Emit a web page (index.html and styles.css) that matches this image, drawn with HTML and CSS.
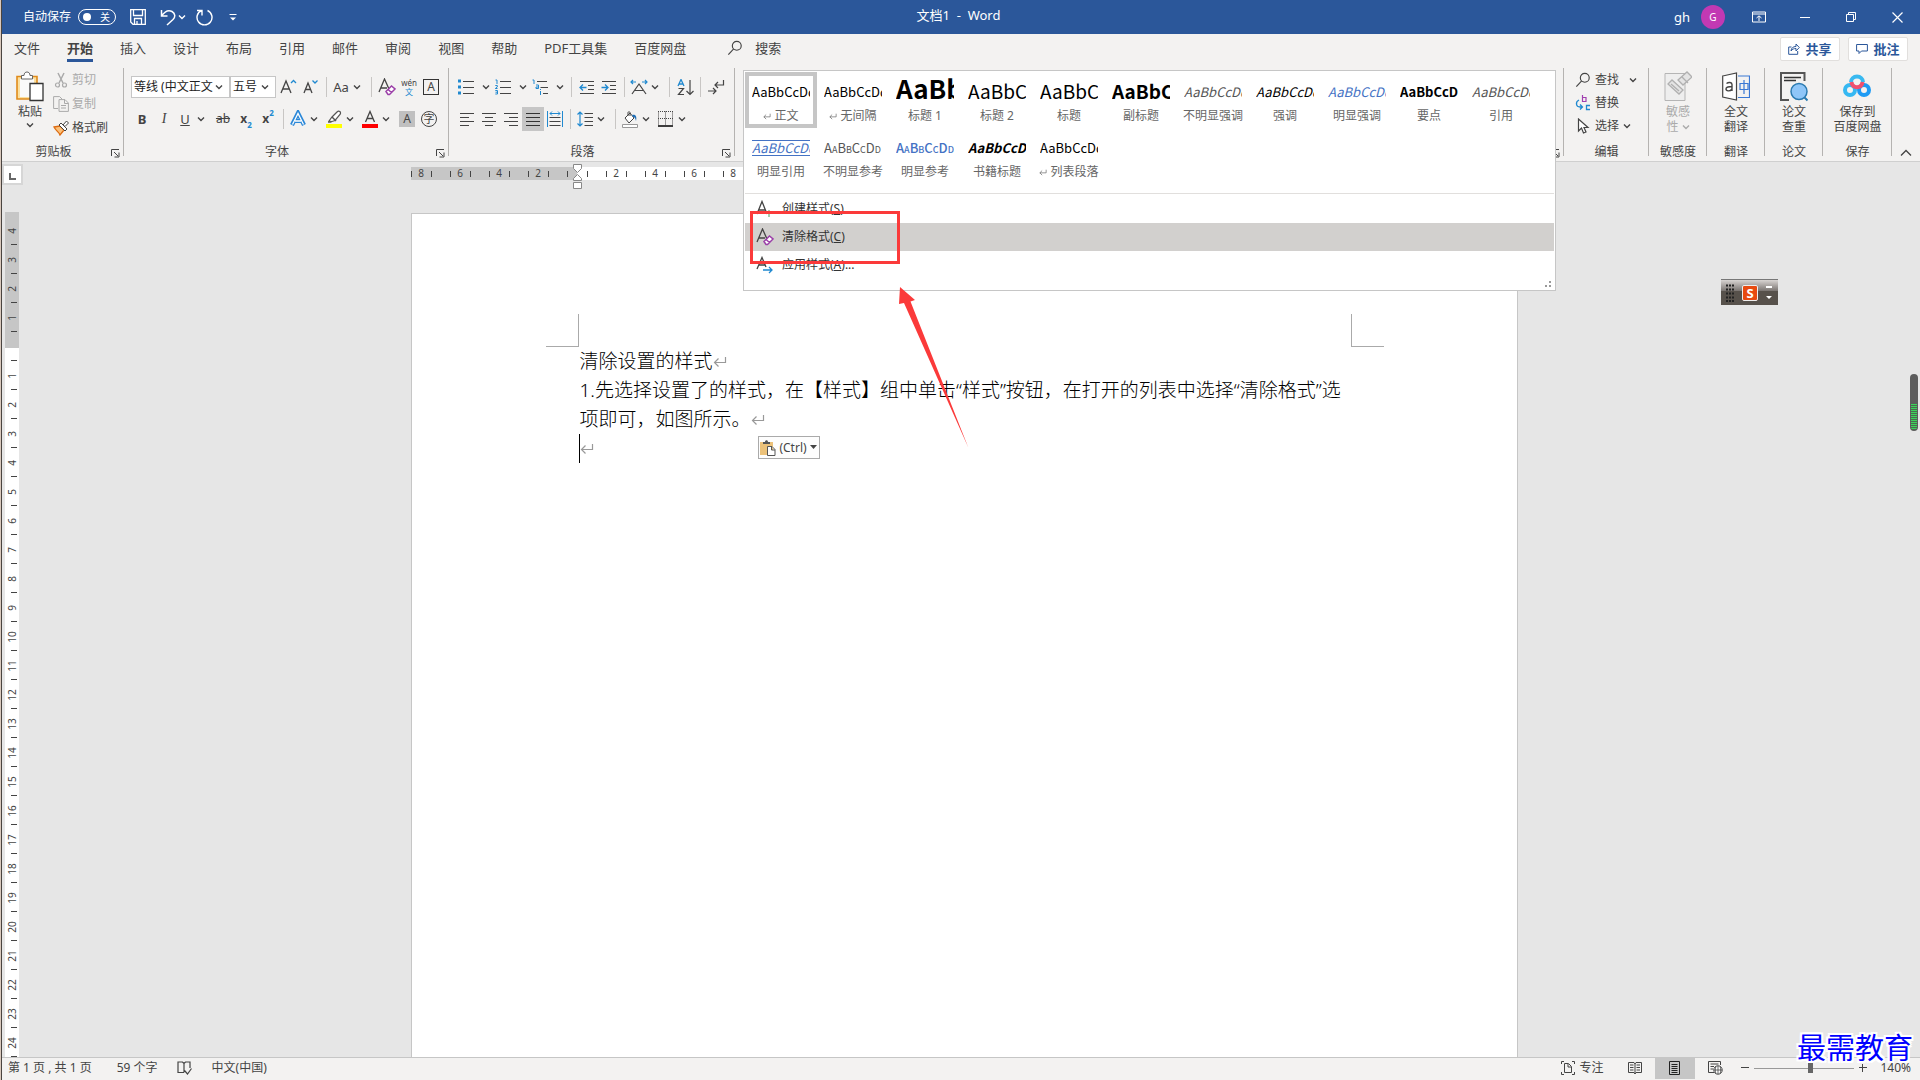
FILE: index.html
```html
<!DOCTYPE html>
<html lang="zh-CN">
<head>
<meta charset="utf-8">
<title>文档1 - Word</title>
<link rel="stylesheet" href="styles.css">
</head>
<body>
<svg class="defs" aria-hidden="true">
  <symbol id="chev" viewBox="0 0 8 8"><path d="M1 2.5 4 5.5 7 2.5" fill="none" stroke="currentColor" stroke-width="1.4"/></symbol>
  <symbol id="launch" viewBox="0 0 9 9"><path d="M.5 7V.5H8M3 3l4 4M8 3.5V8H3.500" fill="none" stroke="currentColor"/></symbol>
  <symbol id="find" viewBox="0 0 18 18"><circle cx="11" cy="6.500" r="5" fill="none" stroke="currentColor" stroke-width="1.300"/><path d="M7.500 10 1.500 16.500" stroke="currentColor" stroke-width="1.300"/></symbol>
  <symbol id="eraserA" viewBox="0 0 18 18"><path d="M1 14 6.500 1 11 11M3 10h6" fill="none" stroke="#444" stroke-width="1.300"/><path d="M8 13.500l5.500-5.500 3.500 3-5.500 5.500H10zM10 11.500l3.500 3" fill="#fff" stroke="#9b3fa8" stroke-width="1.500"/></symbol>
  <symbol id="ret" viewBox="0 0 14 14"><path d="M12.500 3v5.500H1.500M5.500 4.500l-4 4 4 4" fill="none" stroke="currentColor" stroke-width="1.200"/></symbol>
</svg>
<div class="app">
  <header class="titlebar">
    <div class="quick">
      <label class="autosave">自动保存 <span class="toggle"><input type="checkbox"><span>关</span></span></label>
      <button aria-label="保存"><svg width="16" height="16" viewBox="0 0 16 16"><path d="M.7.7h14.600v14.600H3L.7 13zM3.500.7v5.800h9V.7M4.500 15V9.500h7V15M7 15v-3" fill="none" stroke="#fff" stroke-width="1.300"/></svg></button>
      <button class="undo" aria-label="撤消"><svg width="16" height="17" viewBox="0 0 16 17"><path d="M1.500 1v6h6M1.500 7C5 2 9 .8 12 2.500c3.500 2 3.500 5.500 1 8L7 16" fill="none" stroke="#fff" stroke-width="1.500"/></svg><svg width="8" height="8"><use href="#chev"/></svg></button>
      <button aria-label="重做"><svg width="17" height="17" viewBox="0 0 17 17"><path d="M5.500 1.500a7.500 7.500 0 1 0 6 0M1 1.500h5v5" fill="none" stroke="#fff" stroke-width="1.400"/></svg></button>
      <button aria-label="自定义快速访问工具栏"><svg width="8" height="8" viewBox="0 0 8 8"><path d="M.5 1.500h7" stroke="#fff"/><path d="M1 4.500h6L4 7.500z" fill="#fff"/></svg></button>
    </div>
    <h1>文档1&nbsp; -&nbsp; Word</h1>
    <div class="window">
      <span>gh</span><span class="avatar">G</span>
      <button aria-label="功能区显示选项"><svg width="14" height="12" viewBox="0 0 14 12"><path d="M.5 1h13v10H.5zM.5 3h13M7 10V5M4.500 7 7 4.800 9.500 7" fill="none" stroke="#fff"/></svg></button>
      <button aria-label="最小化"><svg width="10" height="10"><path d="M0 5.500h10" stroke="#fff"/></svg></button>
      <button aria-label="还原"><svg width="10" height="10" viewBox="0 0 10 10"><path d="M.5 2.500h7v7h-7zM2.500 2.500v-2h7v7h-2" fill="none" stroke="#fff"/></svg></button>
      <button aria-label="关闭"><svg width="11" height="11" viewBox="0 0 11 11"><path d="M.5.5l10 10M10.500.5l-10 10" stroke="#fff" stroke-width="1.200"/></svg></button>
    </div>
  </header>

  <nav class="tabs">
    <a href="#">文件</a><a href="#" class="on">开始</a><a href="#">插入</a><a href="#">设计</a><a href="#">布局</a><a href="#">引用</a><a href="#">邮件</a><a href="#">审阅</a><a href="#">视图</a><a href="#">帮助</a><a href="#">PDF工具集</a><a href="#">百度网盘</a>
    <a href="#" class="search"><svg width="16" height="16"><use href="#find"/></svg>搜索</a>
    <div class="share">
      <button><svg width="12" height="12" viewBox="0 0 12 12"><path d="M3.500 4H.7v7.300h9V8M3 8c.3-3 2-4.500 5-4.500V1l3.300 3.500L8 8V5.500C6 5.500 4.500 6 3 8z" fill="none" stroke="#2b579a"/></svg>共享</button>
      <button><svg width="12" height="12" viewBox="0 0 12 12"><path d="M.6 1.500h10.800V8H5.500L3 10.500V8H.6z" fill="none" stroke="#2b579a"/></svg>批注</button>
    </div>
  </nav>

  <div class="ribbon">
    <section class="group clip">
      <div class="body">
        <button class="big"><svg width="28" height="31" viewBox="0 0 28 31"><path d="M1 5.500h20v22.500H1z" fill="#fbe0a0" stroke="#e08a1a" stroke-width="1.600"/><path d="M4 8h14v18H4z" fill="#fafafa"/><path d="M5.500 8V4.500H8C8 2 9.500 1 11 1s3 1 3 3.500h2.500V8z" fill="#fff" stroke="#666"/><path d="M14 12.500h13v17H14z" fill="#fff" stroke="#333" stroke-width="1.300"/></svg><span>粘贴</span><svg width="8" height="8"><use href="#chev"/></svg></button>
        <div class="stack">
          <button class="off"><svg width="16" height="16" viewBox="0 0 16 16"><path d="M5 1l5 10M11 1 6 11" stroke="#aaa" stroke-width="1.500"/><circle cx="4.500" cy="13" r="2" fill="none" stroke="#aaa" stroke-width="1.200"/><circle cx="11.500" cy="13" r="2" fill="none" stroke="#aaa" stroke-width="1.200"/></svg>剪切</button>
          <button class="off"><svg width="16" height="16" viewBox="0 0 16 16"><path d="M5 12.500H.6V.6h6l2.500 2.500M6 3.600h6l3.400 3.400v8.400H6zM11.500 4v3.500H15M8 9.500h5M8 12h5" fill="none" stroke="#aaa"/></svg>复制</button>
          <button><svg width="16" height="16" viewBox="0 0 16 16"><path d="M1 7l6-1 4 4-4 5c-1-3-4-4-6-8z" fill="#fbc07a" stroke="#dd6b10" stroke-width="1.300"/><path d="M6 5l2-2 6 6-2 2zM10 5l3.500-4 2 2L12 6.500z" fill="#fff" stroke="#444"/></svg>格式刷</button>
        </div>
      </div>
      <footer><span>剪贴板</span><button aria-label="剪贴板选项"><svg width="9" height="9"><use href="#launch"/></svg></button></footer>
    </section>

    <section class="group font">
      <div class="rows">
        <div class="row">
          <span class="combo face"><select aria-label="字体"><option>等线 (中文正文</option></select><svg width="8" height="8"><use href="#chev"/></svg></span><span class="combo size"><select aria-label="字号"><option>五号</option></select><svg width="8" height="8"><use href="#chev"/></svg></span>
          <button class="ic pre" aria-label="增大字号"><svg width="18" height="16" viewBox="0 0 18 16"><path d="M1 14 6 2l5 12M3 10h6" fill="none" stroke="#444" stroke-width="1.300"/><path d="M11 4l2.500-2.500L16 4" fill="none" stroke="#2089d0" stroke-width="1.300"/></svg></button>
          <button class="ic" aria-label="减小字号"><svg width="18" height="16" viewBox="0 0 18 16"><path d="M2 14 6 4l4 10M4 10.500h4.500" fill="none" stroke="#444" stroke-width="1.300"/><path d="M10.500 1.500 13 4l2.500-2.500" fill="none" stroke="#2089d0" stroke-width="1.300"/></svg></button>
          <i class="sep"></i>
          <button class="split" aria-label="更改大小写"><b class="aa">Aa</b><svg width="8" height="8"><use href="#chev"/></svg></button>
          <i class="sep"></i>
          <button class="ic" aria-label="清除所有格式"><svg width="18" height="18"><use href="#eraserA"/></svg></button>
          <button class="ic wen"><span>wén</span><span>文</span></button>
          <button class="ic"><span class="boxed">A</span></button>
        </div>
        <div class="row">
          <button class="ic b">B</button><button class="ic i">I</button>
          <button class="split"><span class="u">U</span><svg width="8" height="8"><use href="#chev"/></svg></button>
          <button class="ic strike">ab</button>
          <button class="ic x">x<sub>2</sub></button><button class="ic x">x<sup>2</sup></button>
          <i class="sep"></i>
          <button class="split" aria-label="文本效果"><svg width="16" height="18" viewBox="0 0 16 18"><path d="M2 15 8 3l6 12M4.500 11h7" fill="none" stroke="#2b88d8" stroke-width="4.200"/><path d="M2.500 14.500 8 3.500l5.500 11M5 11h6" fill="none" stroke="#fff" stroke-width="1.300"/></svg><svg width="8" height="8"><use href="#chev"/></svg></button>
          <button class="split" aria-label="突出显示颜色"><svg width="16" height="18" viewBox="0 0 16 18"><path d="M3 11l3-4 5-5c2-2 4.500 0 3 2.500l-5 6-3 1z" fill="#fff" stroke="#555" stroke-width="1.200"/><path d="M2 12h3.500M6 7l4 4" stroke="#555" stroke-width="1.500"/><path d="M0 14h16v4H0z" fill="#ff0"/></svg><svg width="8" height="8"><use href="#chev"/></svg></button>
          <button class="split" aria-label="字体颜色"><svg width="16" height="18" viewBox="0 0 16 18"><path d="M3.500 12 8 1.500 12.500 12M5 8.500h6" fill="none" stroke="#444" stroke-width="1.300"/><path d="M0 14h16v4H0z" fill="#f00"/></svg><svg width="8" height="8"><use href="#chev"/></svg></button>
          <button class="ic"><span class="shaded">A</span></button>
          <button class="ic"><span class="circled">字</span></button>
        </div>
      </div>
      <footer><span>字体</span><button aria-label="字体选项"><svg width="9" height="9"><use href="#launch"/></svg></button></footer>
    </section>

    <section class="group para">
      <div class="rows">
        <div class="row">
          <button class="split wide" aria-label="项目符号"><svg width="16" height="16" viewBox="0 0 16 16"><path d="M0 .5h3v3H0zM0 6.500h3v3H0zM0 12.500h3v3H0z" fill="#2089d0"/><path d="M5 2.500h11M5 8.500h11M5 14.500h11" stroke="#444"/></svg><svg width="8" height="8"><use href="#chev"/></svg></button>
          <button class="split wide" aria-label="编号"><svg width="16" height="16" viewBox="0 0 16 16"><path d="M.5 1H2v4M.3 6.500h2v1.500l-2 1.500h2.200M.3 11.500h2.200V15H.3M.5 13.200h2" fill="none" stroke="#2089d0"/><path d="M5 2.500h11M5 8.500h11M5 14.500h11" stroke="#444"/></svg><svg width="8" height="8"><use href="#chev"/></svg></button>
          <button class="split wide" aria-label="多级列表"><svg width="16" height="16" viewBox="0 0 16 16"><path d="M.5 1H2v4M4 6h2.500v3.500H4V8h2.500M8.500 12v4M8.500 10v1" fill="none" stroke="#2089d0"/><path d="M5 2.500h10M8.500 8.500H16M11 14.500h5" stroke="#444"/></svg><svg width="8" height="8"><use href="#chev"/></svg></button>
          <i class="sep"></i>
          <button class="ic" aria-label="减少缩进量"><svg width="16" height="16" viewBox="0 0 16 16"><path d="M1 2.500h14M9 6.500h6M9 10.500h6M1 14.500h14" stroke="#444"/><path d="M7.500 8.500H1M4 5.500l-3 3 3 3" fill="none" stroke="#2089d0" stroke-width="1.300"/></svg></button>
          <button class="ic" aria-label="增加缩进量"><svg width="16" height="16" viewBox="0 0 16 16"><path d="M1 2.500h14M9 6.500h6M9 10.500h6M1 14.500h14" stroke="#444"/><path d="M.5 8.500H7M4 5.500l3 3-3 3" fill="none" stroke="#2089d0" stroke-width="1.300"/></svg></button>
          <i class="sep"></i>
          <button class="split" aria-label="中文版式"><svg width="18" height="16" viewBox="0 0 18 16"><path d="M2 15 9 5l7 10M5 11.500h8" fill="none" stroke="#444" stroke-width="1.200"/><path d="M6 3H1M3 1 1 3l2 2M12 3h5M15 1l2 2-2 2" fill="none" stroke="#2089d0" stroke-width="1.200"/></svg><svg width="8" height="8"><use href="#chev"/></svg></button>
          <i class="sep"></i>
          <button class="ic" aria-label="排序"><svg width="17" height="17" viewBox="0 0 17 17"><path d="M1 7 4 .5 7 7M2 5h4" fill="none" stroke="#2089d0" stroke-width="1.300"/><path d="M1.500 9.500h5l-5 6h5.500M13 1v14M9.500 12l3.500 3.500 3.500-3.500" fill="none" stroke="#444" stroke-width="1.200"/></svg></button>
          <i class="sep"></i>
          <button class="ic" aria-label="显示编辑标记"><svg width="18" height="17" viewBox="0 0 18 17"><path d="M16.500 1v5H8M11 3 8 6l3 3M1 12h8M6 9l3 3-3 3" fill="none" stroke="#444" stroke-width="1.200"/></svg></button>
        </div>
        <div class="row">
          <button class="ic" aria-label="左对齐"><svg width="14" height="14"><path d="M0 1.500h14M0 5.500h9M0 9.500h14M0 13.500h9" stroke="#444"/></svg></button>
          <button class="ic" aria-label="居中"><svg width="14" height="14"><path d="M0 1.500h14M3 5.500h8M0 9.500h14M3 13.500h8" stroke="#444"/></svg></button>
          <button class="ic" aria-label="右对齐"><svg width="14" height="14"><path d="M0 1.500h14M5 5.500h9M0 9.500h14M5 13.500h9" stroke="#444"/></svg></button>
          <button class="ic sel" aria-label="两端对齐"><svg width="14" height="14"><path d="M0 1.500h14M0 5.500h14M0 9.500h14M0 13.500h14" stroke="#333"/></svg></button>
          <button class="ic" aria-label="分散对齐"><svg width="16" height="16" viewBox="0 0 16 16"><path d="M.5 0v16M15.500 0v16M3 2.500h10M5 .5 3 2.500l2 2M11 .5l2 2-2 2" fill="none" stroke="#2089d0"/><path d="M2.500 6.500h11M2.500 10.500h11M2.500 14.500h11" stroke="#444"/></svg></button>
          <i class="sep"></i>
          <button class="split" aria-label="行距"><svg width="16" height="16" viewBox="0 0 16 16"><path d="M3 1v14M.5 3.500 3 1l2.500 2.500M.5 12.500 3 15l2.500-2.500" fill="none" stroke="#2089d0" stroke-width="1.200"/><path d="M7.500 2.500H16M7.500 6.500H16M7.500 10.500H16M7.500 14.500H16" stroke="#444"/></svg><svg width="8" height="8"><use href="#chev"/></svg></button>
          <i class="sep"></i>
          <button class="split" aria-label="底纹"><svg width="16" height="17" viewBox="0 0 16 17"><path d="M3 7l5-5 4 5-5 5zM6 5V1.500c0-1 2-1 2 0V5" fill="#fff" stroke="#444"/><path d="M10 4c4-1 5 2 4 6-1-3-1-4-3-4z" fill="#1f6fb8"/><path d="M.5 13.500h15v3H.5z" fill="#fff" stroke="#999"/></svg><svg width="8" height="8"><use href="#chev"/></svg></button>
          <button class="split" aria-label="边框"><svg width="16" height="16" viewBox="0 0 16 16"><path d="M.5.5v14M14.500.5v14M7.500.5v14M0 .5h15M0 7.500h15" stroke="#444" stroke-dasharray="1 1"/><path d="M0 15h15" stroke="#000" stroke-width="1.500"/></svg><svg width="8" height="8"><use href="#chev"/></svg></button>
        </div>
      </div>
      <footer><span>段落</span><button aria-label="段落选项"><svg width="9" height="9"><use href="#launch"/></svg></button></footer>
    </section>

    <section class="group styles">
      <footer><span></span><button aria-label="样式选项"><svg width="9" height="9"><use href="#launch"/></svg></button></footer>
      <div class="popup">
        <div class="gallery">
          <button class="cur"><span class="pv">AaBbCcDd</span><small><svg width="8" height="8"><use href="#ret"/></svg> 正文</small></button>
          <button><span class="pv">AaBbCcDd</span><small><svg width="8" height="8"><use href="#ret"/></svg> 无间隔</small></button>
          <button><span class="pv h1">AaBb</span><small>标题 1</small></button>
          <button><span class="pv h2">AaBbCc</span><small>标题 2</small></button>
          <button><span class="pv h2">AaBbCc</span><small>标题</small></button>
          <button><span class="pv h2 bold">AaBbCc</span><small>副标题</small></button>
          <button><span class="pv it soft">AaBbCcDd</span><small>不明显强调</small></button>
          <button><span class="pv it">AaBbCcDd</span><small>强调</small></button>
          <button><span class="pv it blue">AaBbCcDd</span><small>明显强调</small></button>
          <button><span class="pv bold">AaBbCcDd</span><small>要点</small></button>
          <button><span class="pv it soft">AaBbCcDd</span><small>引用</small></button>
          <button><span class="pv it blue lined">AaBbCcDd</span><small>明显引用</small></button>
          <button><span class="pv caps soft">AaBbCcDd</span><small>不明显参考</small></button>
          <button><span class="pv caps blue medium">AaBbCcDd</span><small>明显参考</small></button>
          <button><span class="pv it bold">AaBbCcDd</span><small>书籍标题</small></button>
          <button><span class="pv">AaBbCcDd</span><small><svg width="8" height="8"><use href="#ret"/></svg> 列表段落</small></button>
        </div>
        <div class="menu">
          <button><svg width="18" height="18" viewBox="0 0 18 18"><path d="M1 14 6 1.500 11 14M3 10h6" fill="none" stroke="#444" stroke-width="1.300"/><path d="M13 10v7M10 13.500h6" stroke="#4a9a5a"/></svg><span>创建样式(<u>S</u>)</span></button>
          <button class="hot"><svg width="18" height="18"><use href="#eraserA"/></svg><span>清除格式(<u>C</u>)</span></button>
          <button><svg width="18" height="18" viewBox="0 0 18 18"><path d="M1 13 6 1.500 10 11M3 9h6" fill="none" stroke="#444" stroke-width="1.300"/><path d="M7 14h9M13 11l3 3-3 3" fill="none" stroke="#2089d0" stroke-width="1.300"/></svg><span>应用样式(<u>A</u>)...</span></button>
        </div>
        <svg class="grip" width="6" height="6"><path d="M4 0h2v2H4zM4 4h2v2H4zM0 4h2v2H0z" fill="#999"/></svg>
        <div class="frame"></div>
        <svg class="arrow" width="72" height="164" viewBox="897 286 72 164"><path d="M900 287 915 300 910.500 301.500 968.500 448 904 303 899 304z" fill="#fb3a3a"/></svg>
      </div>
    </section>

    <section class="group edit">
      <div class="stack">
        <button><svg width="16" height="16"><use href="#find"/></svg>查找<svg class="far" width="8" height="8"><use href="#chev"/></svg></button>
        <button><svg width="16" height="16" viewBox="0 0 16 16"><path d="M7.500 0v6.500h3.500v-4H7.500" fill="none" stroke="#a13fb0" stroke-width="1.200"/><path d="M15 10.500h-3.500v4H15M4 5C0 7 1 12 5 12h2M5 9.500 7.500 12 5 14.500" fill="none" stroke="#2089d0" stroke-width="1.300"/></svg>替换</button>
        <button><svg width="16" height="16" viewBox="0 0 16 16"><path d="M3.500 1v12l3-3 2 5 2.500-1-2-4.500H13z" fill="#fff" stroke="#444" stroke-width="1.200"/></svg>选择<svg width="8" height="8"><use href="#chev"/></svg></button>
      </div>
      <footer><span>编辑</span></footer>
    </section>
    <section class="group add">
      <button class="big off"><svg width="28" height="31" viewBox="0 0 28 31"><path d="M1 2.500h20v27H1z" fill="#eee" stroke="#b5b5b5"/><path d="M4 13l4-4 11 10-4 4zM7 13l8 7M14 9l9-8 5 5-9 8zM18 6l6 6" fill="#e4e4e4" stroke="#b0b0b0" stroke-width="1.300"/></svg><span>敏感<br>性 <svg width="8" height="8"><use href="#chev"/></svg></span></button>
      <footer><span>敏感度</span></footer>
    </section>
    <section class="group add">
      <button class="big"><svg width="28" height="31" viewBox="0 0 28 31"><path d="M.7 5 14.500 2v27L.7 26z" fill="#fff" stroke="#444" stroke-width="1.200"/><path d="M4.500 12.500c2-1.500 5.500-1.500 5.500 1V20M10 15.500c-3 0-6 .3-6 2.500s4 2.800 6 0" fill="none" stroke="#444" stroke-width="1.400"/><path d="M16 5h11.500v21.500H16M18 12.500h8v6h-8zM22 9v14" fill="none" stroke="#3a78d4" stroke-width="1.200"/></svg><span>全文<br>翻译</span></button>
      <footer><span>翻译</span></footer>
    </section>
    <section class="group add">
      <button class="big"><svg width="28" height="31" viewBox="0 0 28 31"><path d="M9 29H1V2h23.500v8" fill="none" stroke="#555" stroke-width="2"/><path d="M4 6.500h17M4 9.500h12" stroke="#333" stroke-width="1.400"/><circle cx="19" cy="20.500" r="8" fill="#8fc6f8" stroke="#2a7ab0" stroke-width="1.500"/><path d="M24.500 26.500l3 3" stroke="#2a7ab0" stroke-width="2"/></svg><span>论文<br>查重</span></button>
      <footer><span>论文</span></footer>
    </section>
    <section class="group save">
      <button class="big"><svg width="28" height="31" viewBox="0 0 28 31"><g fill="none" stroke-width="4"><path d="M8 11a6 5.500 0 0 1 12 0" stroke="#39b9f0"/><circle cx="7" cy="19" r="5" stroke="#35b8f2"/><circle cx="21" cy="19" r="5" stroke="#1e9bf4"/><path d="M8.500 11c.5 7 10.500 7 11 0" stroke="#f0506e"/></g></svg><span>保存到<br>百度网盘</span></button>
      <footer><span>保存</span></footer>
    </section>
    <button class="fold" aria-label="折叠功能区"><svg width="12" height="8" viewBox="0 0 12 8"><path d="M1 6.500 6 1.500l5 5" fill="none" stroke="#444" stroke-width="1.300"/></svg></button>
  </div>

  <main class="workspace">
    <div class="side">
      <button class="tabstop" aria-label="制表符"><svg width="7" height="7"><path d="M1 0v6h6" fill="none" stroke="#666" stroke-width="2"/></svg></button>
      <ol class="vruler"><li><b>4</b></li><li><b>3</b></li><li><b>2</b></li><li><b>1</b></li><li></li><li><b>1</b></li><li><b>2</b></li><li><b>3</b></li><li><b>4</b></li><li><b>5</b></li><li><b>6</b></li><li><b>7</b></li><li><b>8</b></li><li><b>9</b></li><li><b>10</b></li><li><b>11</b></li><li><b>12</b></li><li><b>13</b></li><li><b>14</b></li><li><b>15</b></li><li><b>16</b></li><li><b>17</b></li><li><b>18</b></li><li><b>19</b></li><li><b>20</b></li><li><b>21</b></li><li><b>22</b></li><li><b>23</b></li><li><b>24</b></li></ol>
    </div>
    <div class="canvas">
      <div class="rulerwrap">
        <ol class="hruler"><li>8</li><li>6</li><li>4</li><li>2</li><li></li><li>2</li><li>4</li><li>6</li><li>8</li></ol>
        <svg class="indent" width="10" height="26" viewBox="0 0 10 26"><path d="M.5.5h8v4l-4 4-4-4zM.5 16.500v-2l4-4 4 4v2zM.5 18.500h8v6h-8z" fill="#fff" stroke="#888"/></svg>
      </div>
      <article class="page">
        <div class="marks"><i class="tl"></i><i class="tr"></i></div>
        <div class="text">
          <p>清除设置的样式<svg width="14" height="14"><use href="#ret"/></svg></p>
          <p>1.先选择设置了的样式，在【样式】组中单击“样式”按钮，在打开的列表中选择“清除格式”选项即可，如图所示。<svg width="14" height="14"><use href="#ret"/></svg></p>
          <p class="caret"><svg width="14" height="14"><use href="#ret"/></svg><button class="pasteopt"><svg width="16" height="16" viewBox="0 0 16 16"><path d="M0 2h13v13H0z" fill="#ecc27a"/><path d="M3 4V2h2c0-2.500 3-2.500 3 0h2v2z" fill="#555"/><path d="M7.500 6.500H12l3 3v6H7.500zM11.500 7v3H15" fill="#fff" stroke="#555"/></svg><span>(Ctrl)</span><svg width="7" height="5"><path d="M0 0h7L3.500 4z" fill="#444"/></svg></button></p>
        </div>
      </article>
    </div>
    <div class="ime"><svg width="9" height="18"><path d="M1 1.500h8M1 5.500h8M1 9.500h8M1 13.500h8M1 17h8" stroke="#222" stroke-width="2" stroke-dasharray="2 1"/></svg><b>S</b><svg width="6" height="13"><path d="M0 0h6v2H0zM0 10h6L3 13z" fill="#fff"/></svg></div>
    <div class="meter"><i></i></div>
    <div class="brand">最需教育</div>
  </main>

  <footer class="status">
    <span class="pages">第 1 页 , 共 1 页</span><span>59 个字</span>
    <svg width="16" height="14" viewBox="0 0 16 14"><path d="M7 11.500H1V1h4.500L7 2.500 8.500 1H13v6M7 2.500v9M7.500 9.500l3 3.500L14.500 7.500" fill="none" stroke="#444" stroke-width="1.200"/></svg>
    <span>中文(中国)</span>
    <div class="views">
      <button class="focus"><svg width="14" height="14" viewBox="0 0 14 14"><path d="M3 .5H.5V3M.5 11v2.500H3M11 .5h2.500V3M13.500 11v2.500H11M3.500 2.500h4l3 3v6h-7zM7 3v3h3" fill="none" stroke="#444"/></svg>专注</button>
      <button aria-label="阅读视图"><svg width="14" height="14" viewBox="0 0 14 14"><path d="M.5 1.500H6L7 3l1-1.500h5.500v10H8L7 13l-1-1.500H.5zM7 3v10M2 4h3.500M2 6.500h3.500M2 9h3.500M8.500 4H12M8.500 6.500H12M8.500 9H12" fill="none" stroke="#444"/></svg></button>
      <button class="on" aria-label="页面视图"><svg width="12" height="14" viewBox="0 0 12 14"><path d="M.5.5h10v13H.5zM2.500 3.500h6M2.500 5.500h6M2.500 7.500h6M2.500 9.500h6M2.500 11.500h6" fill="none" stroke="#222"/></svg></button>
      <button aria-label="Web 版式视图"><svg width="15" height="14" viewBox="0 0 15 14"><path d="M6 11.500H.5V.5h12V4M2.500 3h8M2.500 5.500H6M2.500 8H5" fill="none" stroke="#444"/><circle cx="10" cy="9" r="4.200" fill="#fff" stroke="#444"/><path d="M6 9h8M10 5v8M8 5.500c-1 2-1 5 0 7M12 5.500c1 2 1 5 0 7" fill="none" stroke="#444" stroke-width=".8"/></svg></button>
    </div>
    <div class="zoom"><button aria-label="缩小"><svg width="8" height="8"><path d="M0 3.500h8" stroke="#444"/></svg></button><input type="range" min="0" max="100" value="56" aria-label="缩放"><button aria-label="放大"><svg width="8" height="8"><path d="M0 3.500h8M3.500 0v8" stroke="#444"/></svg></button></div>
    <span class="pct">140%</span>
  </footer>
</div>
</body>
</html>
```
FILE: styles.css
```css
* { box-sizing: border-box; }
body {
  margin: 0;
  padding-left: 1px;
  background: #d9c9bd;
  color: #444;
  font: 12px/16px "Noto Sans", "Noto Sans CJK SC", sans-serif;
}
button {
  margin: 0; padding: 0; border: 0; background: none;
  color: inherit; font: inherit;
  display: flex; align-items: center; justify-content: center;
}
svg { flex: none; }
a { color: inherit; text-decoration: none; }
ol { list-style: none; margin: 0; padding: 0; }
.defs { position: absolute; width: 0; height: 0; }
.app { display: flex; flex-direction: column; height: 100vh; border-left: 1px solid #4a4440; }

/* title bar */
.titlebar {
  flex: none; height: 34px; padding-left: 21px;
  display: grid; grid-template-columns: 1fr auto 1fr; align-items: center;
  background: #2b579a; color: #fff;
}
.titlebar h1 { margin: 0 26px 0 0; padding-bottom: 4px; font-size: 13px; font-weight: 400; }
.quick { display: flex; align-items: center; gap: 14px; }
.autosave { display: flex; align-items: center; gap: 7px; }
.toggle {
  width: 38px; height: 16px; padding: 0 5px 0 4px; border: 1px solid #fff; border-radius: 8px;
  display: flex; align-items: center; justify-content: space-between; font-size: 10px;
}
.toggle input { appearance: none; margin: 0; width: 8px; height: 8px; border-radius: 4px; background: #fff; }
.quick .undo { gap: 2px; margin-right: -4px; }
.quick button:last-child { margin-left: 2px; }
.window { display: flex; align-items: center; justify-content: flex-end; font-size: 13px; }
.window button { width: 46px; height: 32px; }
.avatar {
  width: 24px; height: 24px; border-radius: 12px; background: #c239b3; margin: 0 11px;
  display: grid; place-items: center; font-size: 10px;
}

/* tab strip */
.tabs {
  flex: none; height: 32px; padding: 0 12px; background: #f3f2f1;
  display: flex; gap: 27px; font-size: 13px; line-height: 28px;
}
.tabs a { height: 28px; }
.tabs .on { font-weight: 700; border-bottom: 3px solid #2b579a; }
.tabs .search { display: flex; align-items: center; gap: 12px; margin-left: 14px; }
.share { display: flex; gap: 8px; margin-left: auto; padding-top: 3px; }
.share button {
  width: 60px; height: 24px; gap: 5px; border: 1px solid #e1dfdd; border-radius: 2px;
  background: #fff; color: #2b579a; font-weight: 700;
}

/* ribbon */
.ribbon {
  flex: none; height: 96px; padding-top: 2px; display: flex;
  background: #f3f2f1; border-bottom: 1px solid #cfcfcf;
}
.group {
  flex: none; display: flex; flex-direction: column; position: relative;
  background: linear-gradient(#b5b3b1, #b5b3b1) right top / 1px 88px no-repeat;
}
.group > footer {
  margin-top: auto; height: 19px; padding-right: 4px;
  display: flex; align-items: center;
}
.group > footer span { flex: 1; text-align: center; }
.group > footer button { width: 9px; height: 9px; margin-top: 4px; }
.clip > footer span, .font > footer span, .para > footer span { padding-right: 6px; }
.group:not(.clip, .font, .para, .styles) > footer { padding-right: 0; }
.clip { width: 122px; }
.font { width: 325px; }
.para { width: 286px; }
.styles { flex: 1; min-width: 0; }
.edit { width: 85px; }
.add { width: 58px; }
.save { width: 69px; }
.body { display: flex; gap: 6px; padding-left: 11px; }
.big {
  flex-direction: column; justify-content: flex-start; gap: 2px;
  padding-top: 3px; margin: 0 auto; line-height: 15px; text-align: center;
}
.body .big { margin: 0; width: 34px; gap: 2px; }
.off { color: #aaa; }
.stack button { height: 24px; gap: 3px; }
.edit .stack { padding: 0 0 0 11px; }
.edit .stack button { height: 23px; gap: 4px; }
.edit .far { margin-left: 6px; }
.rows { display: flex; flex-direction: column; gap: 8px; padding: 7px 7px 0; }
.row { display: flex; height: 24px; align-items: center; }
.ic { width: 22px; height: 24px; }
.pre { margin-left: 2px; }
.split { height: 24px; margin-right: 4px; }
.split > :first-child { width: 20px; }
.split > :last-child { margin: 0 2px; }
.split.wide { width: 37px; margin: 0; }
.split.wide > :first-child { width: 16px; }
.split.wide > :last-child { margin: 0 2px 0 8px; }
.sep { width: 1px; height: 20px; margin: 0 4px; background: #c8c6c4; }
.sel { background: #c6c6c6; }
.combo { display: grid; grid-template-columns: 1fr 14px; align-items: center; height: 22px; background: #fff; border: 1px solid #c6c6c6; }
.combo select {
  grid-area: 1 / 1; min-width: 0; width: 100%; appearance: none; border: 0; margin: 0; padding: 0 0 0 2px;
  background: none; color: #222; font: inherit;
}
.combo svg { grid-area: 1 / 2; }
.face { width: 99px; }
.size { width: 46px; }
.aa { font-size: 13px; font-weight: 400; }
.wen { flex-direction: column; font-size: 8px; line-height: 9px; }
.wen span:last-child { color: #2089d0; }
.boxed { width: 16px; height: 16px; border: 1px solid #333; line-height: 14px; font-size: 12px; }
.shaded { width: 16px; height: 16px; background: #c0c0c0; }
.circled { width: 16px; height: 16px; border: 1px solid #444; border-radius: 8px; font-size: 11px; line-height: 14px; }
.b { font-size: 13px; font-weight: 700; }
.i { font: italic 14px "Liberation Serif", serif; }
.u { font-size: 13px; text-decoration: underline; }
.strike { width: 24px; text-decoration: line-through; }
.x { font-size: 12px; font-weight: 700; }
.x sub, .x sup { font-size: 8px; line-height: 8px; color: #2089d0; }
.x sub { align-self: flex-end; padding-bottom: 2px; }
.x sup { align-self: flex-start; padding-top: 2px; }
.fold { width: 28px; align-self: flex-end; padding-bottom: 4px; }

/* styles drop-down */
.popup {
  position: absolute; z-index: 5; left: 8px; right: 8px; top: 2px; height: 221px; padding: 1px;
  background: #fff; border: 1px solid #c6c6c6;
}
.gallery { display: flex; flex-wrap: wrap; height: 122px; padding-right: 10px; align-content: flex-start; border-bottom: 1px solid #e1dfdd; }
.gallery button {
  width: 72px; height: 56px; padding: 0 3px; border: 4px solid transparent;
  flex-direction: column; justify-content: flex-start;
}
.gallery .cur { border-color: #c6c6c6; }
.pv {
  flex: none; width: 58px; height: 32px; overflow: hidden; text-align: left; white-space: nowrap;
  color: #000; font: 13px/32px "Noto Sans CJK SC", sans-serif;
}
.pv.h1 { font-size: 26px; line-height: 24px; font-weight: 700; }
.pv.h2 { font-size: 19px; line-height: 30px; }
.pv.bold { font-weight: 700; }
.pv.medium { font-weight: 500; }
.pv.it { font-style: italic; }
.pv.soft { color: #555; }
.pv.blue { color: #4472c4; }
.pv.caps { font-variant: small-caps; }
.pv.lined { height: 16px; line-height: 14px; margin: 8px 0; border: solid #4472c4; border-width: 1px 0; }
.gallery small { font-size: 12px; line-height: 16px; color: #666; white-space: nowrap; }
.menu { padding-top: 1px; }
.menu button { width: 100%; height: 28px; padding-left: 11px; gap: 8px; justify-content: flex-start; color: #333; }
.menu .hot { background: #d2d0ce; }
.grip { position: absolute; right: 4px; bottom: 3px; }
.frame { position: absolute; left: 6px; top: 140px; width: 150px; height: 53px; border: 3px solid #fb3a3a; }
.arrow { position: absolute; left: 153px; top: 215px; }

/* document area */
.workspace { flex: 1; min-height: 0; display: flex; position: relative; background: #e6e6e6; padding-right: 11px; }
.side { flex: none; width: 17px; overflow: visible; }
.tabstop { width: 21px; height: 21px; margin: 2px 0 27px; border: 2px solid #d6d6d6; background: #fff; padding-top: 4px; }
.vruler {
  width: 14px; margin-left: 3px; padding-top: 4px;
  background: linear-gradient(#c6c6c6 136px, #fff 136px);
  font-size: 10px; line-height: 14px;
}
.vruler li {
  height: 29px; display: grid; place-items: center;
  background: linear-gradient(#444, #444) 6px 28px / 6px 1px no-repeat;
}
.vruler b { font-weight: 400; transform: rotate(-90deg); }
.canvas { flex: 1; min-width: 0; display: flex; flex-direction: column; align-items: center; }
.rulerwrap { position: relative; width: 1107px; padding: 5px 0 33px; }
.hruler {
  display: flex; width: 943px; height: 13px; overflow: hidden;
  background: linear-gradient(to right, #c6c6c6 166px, #fff 166px);
  font-size: 10px; line-height: 13px; text-align: center;
}
.hruler li {
  flex: none; width: 39px;
  background: linear-gradient(#444, #444) 9px 4px / 1px 6px no-repeat, linear-gradient(#444, #444) 29px 4px / 1px 6px no-repeat;
}
.hruler li:first-child { margin-left: -9px; }
.indent { position: absolute; left: 162px; top: 2px; }
.page { width: 1107px; flex: 1; background: #fff; border: 1px solid #c6c6c6; border-bottom: 0; }
.marks { display: flex; justify-content: space-between; padding: 100px 133px 0 134px; }
.marks i { width: 33px; height: 33px; border: 0 solid #aaa; border-bottom-width: 1px; }
.marks .tl { border-right-width: 1px; }
.marks .tr { border-left-width: 1px; }
.text { padding: 0 164px 0 168px; color: #000; font-size: 19px; line-height: 29px; font-weight: 300; }
.text p { margin: 0; }
.text svg { color: #999; }
.caret { position: relative; box-shadow: -1px 0 #000; }
.pasteopt {
  position: absolute; left: 178px; top: 2px; width: 62px; height: 23px; gap: 3px;
  border: 1px solid #aaa; background: #fdfdfd; color: #444; font-size: 12px; font-weight: 400; line-height: 16px;
}
.ime {
  position: absolute; right: 142px; top: 117px; width: 57px; height: 26px; padding: 0 6px 0 4px;
  display: flex; align-items: center; justify-content: space-between;
  background: linear-gradient(#d8d4d2, #77716e 45%, #57514b 46%); border-top: 1px solid #777;
}
.ime b {
  width: 16px; height: 16px; border: 1px solid #eee; border-radius: 2px; background: #e84a10;
  color: #fff; font-size: 13px; line-height: 14px; text-align: center;
}
.meter { position: absolute; right: 2px; top: 212px; width: 8px; height: 57px; border-radius: 4px; background: #5c5c5c; padding: 30px 1px 1px; }
.meter i { display: block; height: 26px; border-radius: 0 0 3px 3px; background: repeating-linear-gradient(#3bd45b 0 1px, #4a6b50 1px 2px); }
.brand {
  position: absolute; z-index: 2; right: 7px; bottom: -6px;
  color: #00f; font: 29px/34px "Noto Sans CJK SC", sans-serif;
  text-shadow: 2px 0 #fff, -2px 0 #fff, 0 2px #fff, 0 -2px #fff, 2px 2px #fff, -2px -2px #fff, 2px -2px #fff, -2px 2px #fff;
}

/* status bar */
.status {
  flex: none; height: 23px; padding: 0 9px 2px 6px; display: flex; align-items: center; gap: 19px;
  background: #f3f2f1; border-top: 1px solid #c6c6c6;
}
.pages { padding-right: 6px; }
.views { display: flex; margin-left: auto; height: 22px; }
.views button { width: 40px; }
.views .focus { width: auto; gap: 4px; margin-right: 12px; }
.views .on { background: #c6c6c6; }
.zoom { display: flex; align-items: center; gap: 5px; margin-left: -13px; }
.zoom input {
  appearance: none; width: 100px; height: 12px; margin: 0;
  background: linear-gradient(#999, #999) center / 100% 1px no-repeat;
}
.zoom input::-webkit-slider-thumb { appearance: none; width: 5px; height: 10px; background: #666; }
.pct { margin-left: -6px; }
```
